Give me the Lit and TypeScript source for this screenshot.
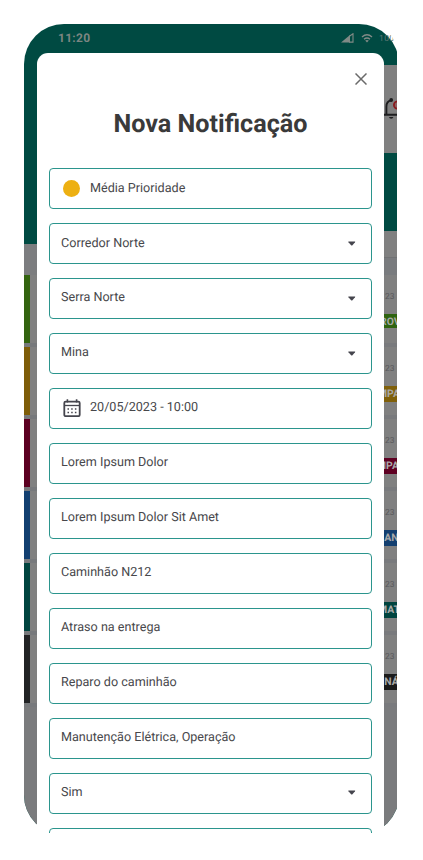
import { LitElement, html, css, svg, nothing } from "lit";
import { customElement } from "lit/decorators.js";
import { styleMap } from "lit/directives/style-map.js";

type Field = { label: string; kind?: "priority" | "date" | "select" };

const FIELDS: Field[] = [
  { label: "Média Prioridade", kind: "priority" },
  { label: "Corredor Norte", kind: "select" },
  { label: "Serra Norte", kind: "select" },
  { label: "Mina", kind: "select" },
  { label: "20/05/2023 - 10:00", kind: "date" },
  { label: "Lorem Ipsum Dolor" },
  { label: "Lorem Ipsum Dolor Sit Amet" },
  { label: "Caminhão N212" },
  { label: "Atraso na entrega" },
  { label: "Reparo do caminhão" },
  { label: "Manutenção Elétrica, Operação" },
  { label: "Sim", kind: "select" },
  { label: "" },
];

const CARDS = [
  { bar: "#33640f", badge: "#2f6410", text: "ROV", shift: -3 },
  { bar: "#7e5d08", badge: "#80600a", text: "MPA", shift: -5 },
  { bar: "#5c0021", badge: "#5e0022", text: "MPA", shift: -6 },
  { bar: "#123f70", badge: "#133f70", text: "AN", shift: 1.3 },
  { bar: "#00443f", badge: "#00443f", text: "MAT", shift: -5 },
  { bar: "#222325", badge: "#1b1b1b", text: "NÁ", shift: 1.3 },
];

const calendar = svg`
  <rect x="1.3" y="2.6" width="15.4" height="14.6" rx="1.4" fill="none" stroke="#45454d" stroke-width="1.8"/>
  <path d="M4.4 .2V3.6M13.6 .2V3.6" stroke="#45454d" stroke-width="1.6" fill="none"/>
  <path d="M1.8 6.5H16.2" stroke="#45454d" stroke-width="1.3" fill="none"/>
  <path d="M4.5 9.2h1.5v1.5H4.5zM8.2 9.2h1.5v1.5H8.2zM11.9 9.2h1.5v1.5h-1.5zM4.5 12.8h1.5v1.5H4.5zM8.2 12.8h1.5v1.5H8.2zM11.9 12.8h1.5v1.5h-1.5z" fill="#45454d"/>`;

@customElement("app-root")
export class AppRoot extends LitElement {
  static styles = css`
    :host {
      display: block;
      box-sizing: border-box;
      height: 860px;
      padding: 24px 26px 27px 24px;
      background: #fff;
      font-family: Roboto, sans-serif;
      text-rendering: geometricPrecision;
    }
    .viewport {
      position: relative;
      height: 809px;
      overflow: hidden;
    }
    .phone {
      width: 375px;
      height: 811px;
      border-radius: 40px;
      overflow: hidden;
      background: #004a42;
    }
    .behind {
      display: flex;
      justify-content: space-between;
      height: 811px;
      width: 373px;
    }
    .left { width: 13px; padding-top: 220px; }
    .right { width: 14px; padding-top: 41px; }
    .left, .right { display: flex; flex-direction: column; box-sizing: border-box; }
    .status {
      position: absolute;
      top: 0;
      left: 0;
      width: 373px;
      box-sizing: border-box;
      height: 29px;
      padding: 0 0 0 34px;
      display: flex;
      align-items: center;
      color: #7c8581;
      overflow: hidden;
      white-space: nowrap;
      border-radius: 0 38px 0 0;
    }
    .time { flex: none; width: 284px; font-size: 12px; font-weight: 700; letter-spacing: .3px; line-height: 14px; padding-bottom: 1px; }
    .signal { width: 13px; height: 10px; flex: none; margin-left: -1px; margin-bottom: 1px; }
    .wifi { width: 12px; height: 10px; flex: none; margin-left: 7px; margin-bottom: 2px; }
    .battery { font-size: 8.5px; letter-spacing: .4px; margin-left: 6px; color: #5c7772; }
    .plain { height: 31px; background: #7c7d7f; flex: none; }
    .edge { height: 68px; flex: none; background: #808080; border-bottom: 4px solid #77797c; display: flex; }
    .bar { width: 6px; }
    .rows { background: #7a7b7d; flex: 1; }
    .topbar { height: 88px; flex: none; background: #808080; display: flex; align-items: flex-start; overflow: hidden; }
    .topbar svg { flex: none; width: 20px; height: 22px; margin: 32px 0 0 1px; }
    .hero { height: 78px; flex: none; }
    .filter { height: 26px; flex: none; background: #808080; border-bottom: 1px solid #717274; }
    .sep { height: 17px; flex: none; background: #797b7e; }
    .card { height: 68px; flex: none; background: #808080; border-bottom: 4px solid #797a7d; overflow: hidden; }
    .date { font-size: 8.4px; line-height: 10px; margin: 17px 0 12px 2px; color: #58585b; }
    .badge { height: 16px; line-height: 16px; font-size: 10.4px; font-weight: 700; color: #a8a8a8; white-space: nowrap; overflow: hidden; }
    .badge.short { height: 14px; line-height: 15px; }
    .modal {
      position: absolute;
      left: 12.5px;
      top: 29.4px;
      width: 347.6px;
      height: 800px;
      box-sizing: border-box;
      padding: 0 12.1px 0 12.5px;
      border-radius: 11px 11px 0 0;
      background: #fff;
    }
    .head { display: flex; justify-content: flex-end; padding: 19.6px 5.2px 0 0; }
    .head svg { width: 12px; height: 12px; display: block; }
    h1 {
      margin: 23px 0 27.4px;
      height: 33px;
      line-height: 33px;
      text-align: center;
      font-size: 25.2px;
      font-weight: 700;
      color: #3a3a3a;
    }
    .field {
      height: 41px;
      box-sizing: border-box;
      margin-bottom: 13.95px;
      border: 1px solid #2b958d;
      border-radius: 4px;
      padding: 0 15.5px 0 11px;
      display: flex;
      align-items: center;
      font-size: 12.6px;
      color: #47474b;
    }
    .label { flex: 1; line-height: 16px; padding-bottom: .6px; }
    .dot { width: 17px; height: 17px; border-radius: 50%; background: #edb012; margin: 0 10px 0 2px; }
    .cal { width: 18px; height: 18px; margin: 0 9.5px 1px 1.5px; }
    .caret { width: 7.5px; height: 5px; margin-bottom: 1px; }
  `;

  private field(f: Field) {
    return html`<div class="field">
      ${f.kind === "priority" ? html`<span class="dot"></span>` : nothing}
      ${f.kind === "date" ? html`<svg class="cal" viewBox="0 0 18 18">${calendar}</svg>` : nothing}
      <span class="label">${f.label}</span>
      ${f.kind === "select"
        ? html`<svg class="caret" viewBox="0 0 8 5"><path d="M.6.3H7.4Q8 .5 7.5 1.2L4.7 4.4Q4 5 3.3 4.4L.5 1.2Q0 .5 .6.3Z" fill="#45454d"/></svg>`
        : nothing}
    </div>`;
  }

  render() {
    return html`<div class="viewport">
      <div class="phone">
        <div class="behind">
          <div class="left">
            <div class="plain"></div>
            <div class="rows">
              ${CARDS.map((c) => html`<div class="edge"><div class="bar" style=${styleMap({ background: c.bar })}></div></div>`)}
            </div>
          </div>
          <div class="right">
            <div class="topbar">
              <svg viewBox="0 0 20 22">
                <path d="M0 17.8H14M2.4 17.5V9.5C2.4 6 4.3 3.9 7.2 3.4" fill="none" stroke="#1d1d1f" stroke-width="1.9"/>
                <circle cx="7.2" cy="3" r="1.9" fill="#1d1d1f"/>
                <path d="M5 19.9H9.4Q9 21.7 7.2 21.7T5 19.9Z" fill="#1d1d1f"/>
                <circle cx="13.5" cy="8" r="3.6" fill="#8b6464" stroke="#8b1b1f" stroke-width="1.8"/>
              </svg>
            </div>
            <div class="hero"></div>
            <div class="filter"></div>
            <div class="sep"></div>
            <div class="rows">
              ${CARDS.map(
                (c, i) => html`<div class="card">
                  <div class="date">23</div>
                  <div class="badge ${i === 0 ? "short" : ""}" style=${styleMap({ background: c.badge, textIndent: `${c.shift}px` })}>${c.text}</div>
                </div>`,
              )}
            </div>
          </div>
        </div>
      </div>
      <div class="status">
        <span class="time">11:20</span>
        <svg class="signal" viewBox="0 0 13 10"><path d="M0 9.6L9 2V9.6Z" fill="#808a86"/><path d="M8.4 3.2L12 .7V9.1H8" fill="none" stroke="#808a86" stroke-width="1.1"/></svg>
        <svg class="wifi" viewBox="0 0 12 10"><path d="M1 4Q6-.4 11 4M3 6.2Q6 3.6 9 6.2" fill="none" stroke="#808a86" stroke-width="1.4"/><path d="M4.2 7.6Q6 6.4 7.8 7.6L6 9.5Z" fill="#808a86"/></svg>
        <span class="battery">100%</span>
      </div>
      <div class="modal">
        <div class="head">
          <svg viewBox="0 0 12 12"><path d="M.5.5L11.5 11.5M11.5.5L.5 11.5" stroke="#6a6a6a" stroke-width="1.5"/></svg>
        </div>
        <h1>Nova Notificação</h1>
        ${FIELDS.map((f) => this.field(f))}
      </div>
    </div>`;
  }
}
